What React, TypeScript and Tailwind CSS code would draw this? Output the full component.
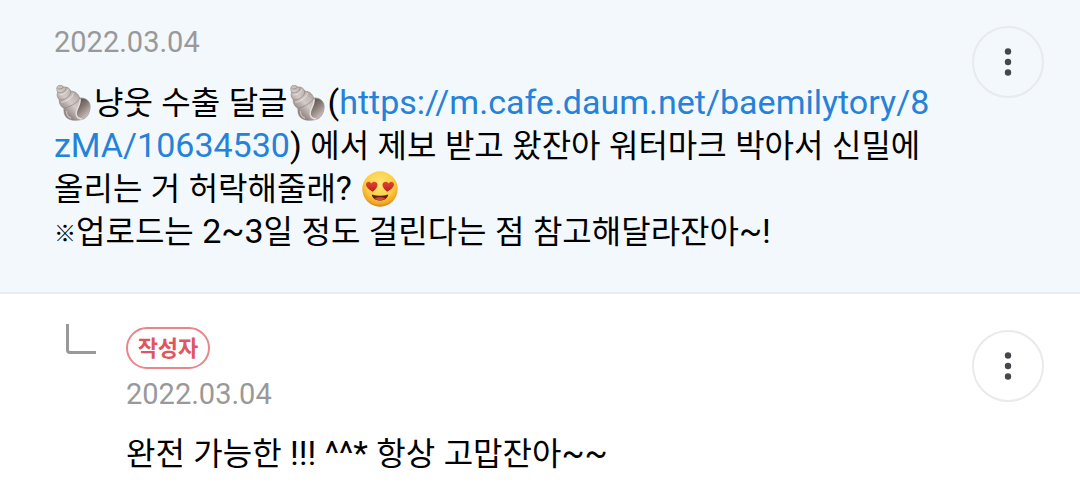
import type { ReactNode } from "react";

function ShellIcon() {
  return (
    <svg viewBox="0 0 36 37" className="mx-0.5 inline-block h-9 w-9 align-[-7px]" role="img" aria-label="소라">
      <defs>
        <linearGradient id="shell-body" x1="0.15" y1="0.7" x2="0.7" y2="0.1">
          <stop offset="0" stopColor="#8f8480" />
          <stop offset="0.4" stopColor="#d3cbc8" />
          <stop offset="0.65" stopColor="#c2b8b4" />
          <stop offset="1" stopColor="#94877f" />
        </linearGradient>
        <linearGradient id="shell-mouth" x1="0" y1="0" x2="0.6" y2="1">
          <stop offset="0" stopColor="#4d4341" />
          <stop offset="0.5" stopColor="#847875" />
          <stop offset="1" stopColor="#c6bcb8" />
        </linearGradient>
      </defs>
      <path
        d="M2 .6C3.8-.2 6.4.4 7.4 2C11 1.6 14 3.6 14.6 6.2C19.2 6.4 22.6 9 23.8 13.4C29 12.6 34.4 16 34.6 21.6C34.8 27.4 32 33.8 27 35.2C21 37 13.2 36.8 9.8 32.8C7.6 30.2 7.6 26.6 7.6 24C4.4 22.2 2.4 18.8 2.8 15C.8 13.2 0 9.8 1.2 7.4C-.2 5-.2 1.8 2 .6Z"
        fill="url(#shell-body)"
        stroke="#8b7f7b"
        strokeWidth="0.6"
      />
      <path d="M24 14C30 12.8 34.2 16.6 34.2 22C34.2 28 31 33.6 26.2 34.6C21.4 34.8 19.8 31 20.6 27.8C21.4 24.4 24.8 20.6 24 14Z" fill="url(#shell-mouth)" />
      <path d="M24.2 14C25.2 20.6 20 23.8 20.2 29.6C20.3 32.8 22.8 35.2 26.6 34.8" fill="none" stroke="#e4dedb" strokeWidth="1.5" />
      <path
        d="M1.3 3.8C3.4 4.6 6.3 3.8 7.4 2M1.2 7.4C4.3 9.6 10.6 6.5 9.8 2.2M2.8 15C6.3 16.7 15.3 12 14.6 6.2M7.6 24C11.6 23.4 22.4 18.4 23.8 13.4"
        fill="none"
        stroke="#8b7f7b"
        strokeWidth="0.7"
      />
      <path
        d="M3 9.8C7 10.3 10.9 7.4 12 4.5M4.8 17.8C10.5 17.5 16.5 13 17.6 8.4M10.2 26.7C10.2 30.3 11.7 33 15 34"
        fill="none"
        stroke="#eee8e5"
        strokeWidth="1.3"
        opacity="0.55"
      />
    </svg>
  );
}

function HeartEyesIcon() {
  return (
    <svg viewBox="0 0 36 36" className="mx-0.5 inline-block h-9 w-9 align-[-7px]" role="img" aria-label="하트 눈">
      <defs>
        <radialGradient id="face" cx="0.5" cy="0.35" r="0.65">
          <stop offset="0" stopColor="#ffe77a" />
          <stop offset="0.6" stopColor="#fccf45" />
          <stop offset="0.88" stopColor="#f0a526" />
          <stop offset="1" stopColor="#c97c20" />
        </radialGradient>
        <linearGradient id="heart" x1="0" y1="0" x2="0" y2="1">
          <stop offset="0" stopColor="#e5452f" />
          <stop offset="1" stopColor="#b81f1c" />
        </linearGradient>
      </defs>
      <circle cx="18" cy="18" r="17.7" fill="url(#face)" />
      <path d="M10.8 20.8C7.6 18.8 4 16.6 4 13.2C4.1 10.6 7.8 9.7 9.2 12.4C11 9.7 15.2 10.3 15.5 13.4C15.7 16.2 13 18.8 10.8 20.8Z" fill="url(#heart)" />
      <path d="M25.2 20.8C28.4 18.8 32 16.6 32 13.2C31.9 10.6 28.2 9.7 26.8 12.4C25 9.7 20.8 10.3 20.5 13.4C20.3 16.2 23 18.8 25.2 20.8Z" fill="url(#heart)" />
      <path d="M9.8 23.4C15 25.2 21 25.2 26.2 23.4C25.8 27.3 22.3 29.4 18 29.4C13.7 29.4 10.2 27.3 9.8 23.4Z" fill="#5d2118" />
      <path d="M12.7 27.5C15 25.8 21 25.8 23.3 27.5C20.9 29.7 15.1 29.7 12.7 27.5Z" fill="#d84a32" />
    </svg>
  );
}

function MoreButton() {
  return (
    <button
      type="button"
      aria-label="더보기"
      className="flex h-18 w-18 shrink-0 items-center justify-center rounded-full border-2 border-[#e8eaec]"
    >
      <svg viewBox="0 0 8 28" className="h-7 w-2" fill="#45484b">
        <circle cx="4" cy="3.5" r="3.2" />
        <circle cx="4" cy="14" r="3.2" />
        <circle cx="4" cy="24.5" r="3.2" />
      </svg>
    </button>
  );
}

function CommentDate({ children }: { children: ReactNode }) {
  return <time className="block text-[29px] leading-9 text-[#999999]">{children}</time>;
}

// Hangul is set a little smaller than the Latin letters around it
function Mixed({ text }: { text: string }) {
  return text.split(/([가-힣]+)/).map((part, i) =>
    i % 2 === 1 ? (
      <span key={i} className="text-[32px] leading-none">
        {part}
      </span>
    ) : (
      part
    )
  );
}

export default function App() {
  return (
    <main className="min-h-screen bg-white font-[Roboto,'Noto_Sans_CJK_KR',sans-serif] text-black">
      <article className="flex items-start border-b-2 border-[#e9ecef] bg-[#f3f8fc] pt-6 pr-9 pb-[39px] pl-[54px]">
        <div className="min-w-0 flex-1 pr-9">
          <CommentDate>2022.03.04</CommentDate>
          <p className="mt-[21px] text-[34px] leading-[43px] break-all">
            <ShellIcon />
            <Mixed text="냥웃 수출 달글" />
            <ShellIcon />(
            <a href="https://m.cafe.daum.net/baemilytory/8zMA/10634530" className="text-[#2582d8]">
              https://m.cafe.daum.net/baemilytory/8zMA/10634530
            </a>
            <Mixed text=") 에서 제보 받고 왔잔아 워터마크 박아서 신밀에 올리는 거 허락해줄래? " />
            <HeartEyesIcon />
            <br />
            <span className="align-[2px] text-[22px] leading-none font-bold">※</span>
            <Mixed text="업로드는 2~3일 정도 걸린다는 점 참고해달라잔아~!" />
          </p>
        </div>
        <div className="pt-0.5">
          <MoreButton />
        </div>
      </article>

      <article className="flex items-start pt-[30px] pr-9 pb-5 pl-[66px]">
        <svg viewBox="0 0 30 30" className="mr-[30px] h-[30px] w-[30px] shrink-0" fill="none" stroke="#999999" strokeWidth="3">
          <path d="M1.5 0V26Q1.5 28.5 4 28.5H30" />
        </svg>
        <div className="min-w-0 flex-1 pt-[3px] pr-9">
          <span className="flex h-[42px] w-[84px] items-center justify-center rounded-full border-2 border-[#e8868b] bg-white text-[22px] font-bold text-[#e0555f]">
            작성자
          </span>
          <div className="mt-[7px]">
            <CommentDate>2022.03.04</CommentDate>
          </div>
          <p className="mt-5 text-[34px] leading-[43px] break-all">
            <Mixed text="완전 가능한 !!! ^^* 항상 고맙잔아~~" />
          </p>
        </div>
        <div className="pt-1.5">
          <MoreButton />
        </div>
      </article>
    </main>
  );
}
